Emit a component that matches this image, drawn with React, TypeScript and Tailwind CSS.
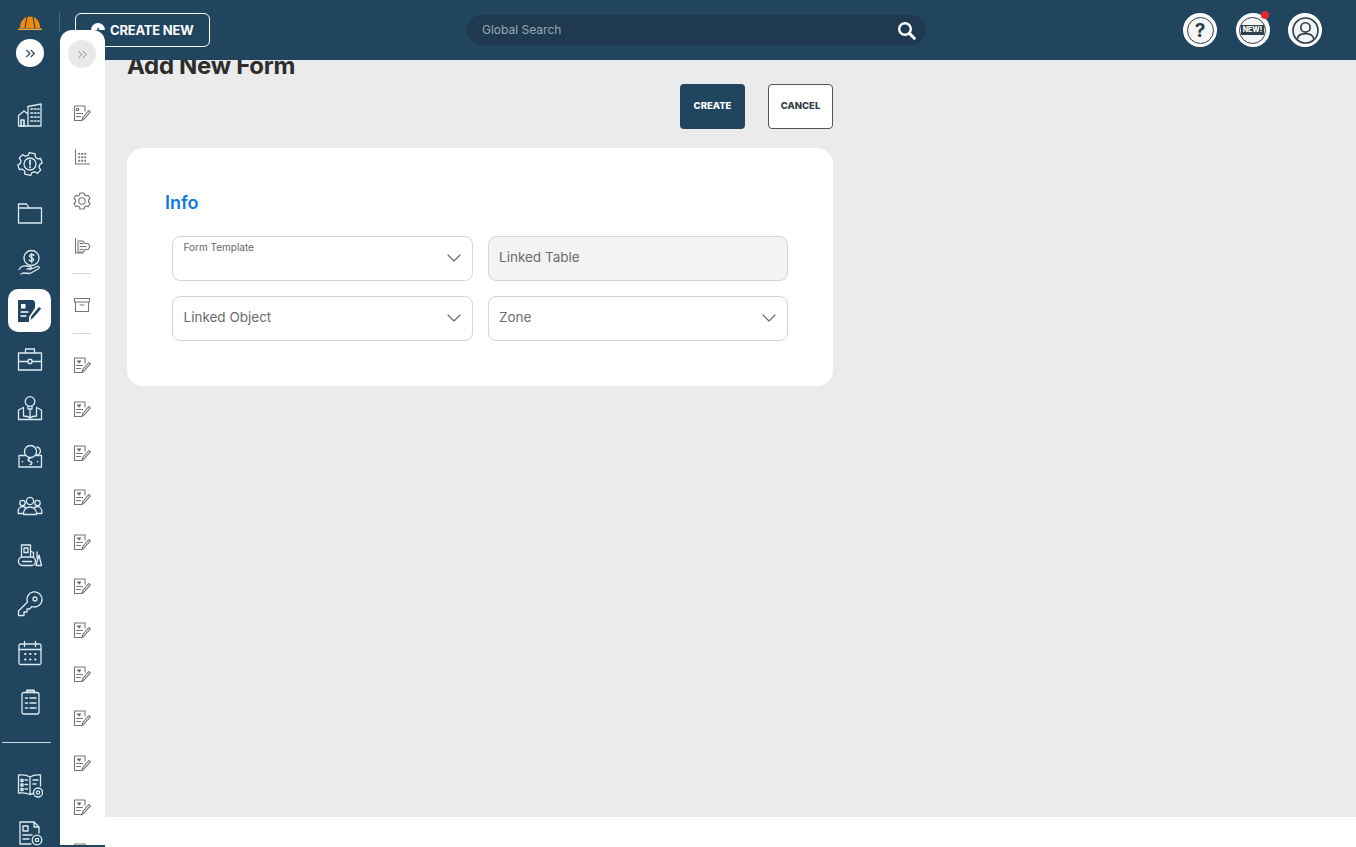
import type { ReactNode } from 'react';
import { ChevronDown, ChevronsRight } from 'lucide-react';

const font = { fontFamily: 'Inter, "Noto Sans", sans-serif' };

function RailSvg({ children }: { children: ReactNode }) {
  return (
    <svg
      width="26"
      height="26"
      viewBox="0 0 26 26"
      fill="none"
      stroke="currentColor"
      strokeWidth="1.3"
      strokeLinecap="round"
      strokeLinejoin="round"
    >
      {children}
    </svg>
  );
}

const railIcons: ReactNode[] = [
  // buildings
  <RailSvg key="building">
    <path d="M11 24V4.500L24 2v22zM1.500 24V13.500L7 9l4 3M1.500 24H24" />
    <path d="M14 7h1.500M17.500 7H19M21 7h1M14 11h1.500M17.500 11H19M21 11h1M14 15h1.500M17.500 15H19M21 15h1M14 19h1.500M17.500 19H19M21 19h1M4 18h3v6H4z" strokeWidth="1.700" />
  </RailSvg>,
  // gear with alert
  <RailSvg key="gear">
    <path d="M10 2h6l.7 3 2.600 1.400 3-1 2.400 4-2.200 2.200v2.800l2.200 2.200-2.400 4-3-1-2.600 1.400-.7 3h-6l-.7-3-2.600-1.400-3 1-2.400-4 2.200-2.200v-2.800L1.300 9.400l2.400-4 3 1L9.300 5z" transform="rotate(12 13 13)" />
    <circle cx="13" cy="13" r="6" />
    <path d="M13 9.500v4.200M13 16v.4" strokeWidth="1.800" />
  </RailSvg>,
  // folder
  <RailSvg key="folder">
    <path d="M1.500 23V4h8l2.500 4h12.500v15z" />
    <path d="M12 8H1.500" />
  </RailSvg>,
  // hand holding coin
  <RailSvg key="coin">
    <circle cx="14.500" cy="9" r="7.500" />
    <path d="M17 6.300c-.6-1-3.800-1.300-4.400.3-.7 2.200 4.600 1.800 4 4.200-.4 1.500-3.500 1.400-4.400.2M14.700 4.500v9" />
    <path d="M2 20.500c2-3.500 4.500-4 7.500-3.500l4 .8c1.500.5 1 2.300-.8 2.200l-2.700-.2M13 20.500l7-3c2-.7 3 1 1.500 2.200L13 24.500l-7-.5-2 1" />
  </RailSvg>,
  null,
  // briefcase
  <RailSvg key="case">
    <path d="M1.500 7h23v17h-23zM8.500 7V3h9v4M1.500 15.500h9.500M15 15.500h9.500" />
    <rect x="11" y="13.500" width="4" height="4" rx="1" />
  </RailSvg>,
  // person with book
  <RailSvg key="mentor">
    <circle cx="13" cy="6.500" r="4.800" />
    <path d="M11 11v3h4v-3M1.500 24.500V15l5-2.500M24.500 24.500V15l-5-2.500M1.500 24.500H24.500M6.500 12.500v8.500c3 0 5 .5 6.500 2 1.500-1.500 3.500-2 6.500-2v-8.500M13 14v9" />
  </RailSvg>,
  // cash and coins
  <RailSvg key="cash">
    <circle cx="13.500" cy="7.500" r="6" />
    <path d="M20 3c3 .5 4.500 4 2.500 6.500-.7 1-1.800 1.500-3 1.500" />
    <path d="M8 11.500H2v11.500h22.500V11.500H19" />
    <path d="M13 14.500c-2.500 0-2.500 2.500 0 3s2.500 3 0 3M5.500 17.500v.3M20.500 17.500v.3" strokeWidth="1.500" />
  </RailSvg>,
  // people group
  <RailSvg key="people">
    <circle cx="13" cy="8" r="3.600" />
    <circle cx="5.500" cy="10" r="2.700" />
    <circle cx="20.500" cy="10" r="2.700" />
    <path d="M6.500 21.500v-1.500c0-3.500 3-6 6.500-6s6.500 2.500 6.500 6v1.500zM6.500 20.500H1.200v-2c0-3 2-5 4.500-5 1 0 2 .3 2.600 1M19.500 20.500h5.300v-2c0-3-2-5-4.500-5-1 0-2 .3-2.600 1" />
  </RailSvg>,
  // bulldozer
  <RailSvg key="dozer">
    <path d="M4.500 14V3h9v11M7 6h4v4.500H7zM13.500 9l3 1.500v4.500" />
    <rect x="1.500" y="15" width="17" height="8.500" rx="4" />
    <path d="M20 10v6M22 13l2.500 10.500h-5.500z" />
    <path d="M5.500 19.500h9" strokeWidth="1.500" />
  </RailSvg>,
  // key
  <RailSvg key="key">
    <path d="M25 8.500a7.500 7.500 0 0 1-10 7l-2.500 2.500h-2.500v3H7v3.500H1.500v-4.500L10.500 11a7.500 7.500 0 1 1 14.500-2.500z" />
    <circle cx="18" cy="8" r="2" />
  </RailSvg>,
  // calendar
  <RailSvg key="calendar">
    <rect x="2" y="4" width="22" height="20.500" rx="1.500" />
    <path d="M2 9.500h22M7.500 1.500v5M18.500 1.500v5" />
    <path d="M8 14h.6M13 14h.6M18 14h.6M8 19.500h.6M13 19.500h.6M18 19.500h.6" strokeWidth="1.800" />
  </RailSvg>,
  // clipboard list
  <RailSvg key="clipboard">
    <rect x="5" y="3.500" width="17" height="21.500" rx="2" />
    <path d="M10 3.500V1.500h7v2" strokeWidth="1.800" />
    <path d="M8.500 9h2M8.500 14h2M8.500 19h2M13 9h6M13 14h6M13 19h6" strokeWidth="1.500" />
  </RailSvg>,
];

const bottomIcons: ReactNode[] = [
  // open book with gear
  <RailSvg key="manual">
    <path d="M13 5v17.500c-3-1.500-7-2-11.500-1.500V3c4.500-.5 8.500 0 11.500 2zM13 5c3-2 7-2.500 10.500-2v11M13 22.500c1-.5 2-.8 3-1" />
    <path d="M4 7.500h2v2H4zM4 12h2v2H4zM4 16.500h2v2H4zM16 8h5M16 12h3M8 8h2.500M8 12.500h2.500M8 17h2.500" strokeWidth="1.400" />
    <circle cx="21" cy="20.500" r="4.500" />
    <circle cx="21" cy="20.500" r="1.600" />
  </RailSvg>,
  // document with gear
  <RailSvg key="docgear">
    <path d="M17 2H3v22h11M17 2l5 5v6M17 2v5h5" />
    <path d="M6 6h5v5H6zM6 15h9M6 19h6" strokeWidth="1.400" />
    <circle cx="20" cy="20" r="4.800" />
    <circle cx="20" cy="20" r="1.700" />
  </RailSvg>,
];

function ActiveFormIcon() {
  return (
    <svg width="26" height="26" viewBox="0 0 26 26" fill="none" strokeLinecap="round" strokeLinejoin="round">
      <path d="M2 2h15l2 2v6l-6 9v5H2z" fill="#21445f" />
      <path d="M5 6h4.500v4.500H5z" fill="#ffffff" />
      <path d="M5 14h7M5 18h5" stroke="#ffffff" strokeWidth="1.400" />
      <path d="M14 22.500l1-4.500 8-9.500 2.500 2.200-8 9.300z" fill="#21445f" stroke="#ffffff" strokeWidth="0.800" />
    </svg>
  );
}

function SubSvg({ children }: { children: ReactNode }) {
  return (
    <svg
      width="18"
      height="18"
      viewBox="0 0 18 18"
      fill="none"
      stroke="#757575"
      strokeWidth="1.100"
      strokeLinecap="round"
      strokeLinejoin="round"
    >
      {children}
    </svg>
  );
}

function SubFormIcon({ heart = false }: { heart?: boolean }) {
  return (
    <SubSvg>
      <path d="M12 7V2H1.500v14.500H9" />
      {heart ? (
        <path d="M4.500 4.800h3.500L6.200 7.200z" fill="#555555" strokeWidth="0.600" />
      ) : (
        <path d="M3.500 4.500h2v2h-2z" />
      )}
      <path d="M3.500 9.500h6M3.500 12.500h4" />
      <path d="M9 16.500l.8-3.200 6-6.800 1.500 1.300-6 6.900z" />
    </SubSvg>
  );
}

const subTopIcons: ReactNode[] = [
  <SubFormIcon key="form" />,
  <SubSvg key="chart">
    <path d="M2.500 1.500v14.500H16.500" />
    <path d="M5.500 5h1.500v1.500H5.500zM8.500 5H10v1.500H8.500zM11.500 5h1.500v1.500h-1.500zM5.500 8.500h1.500V10H5.500zM8.500 8.500H10V10H8.500zM11.500 8.500h1.500V10h-1.500zM5.500 12h1.500v1.500H5.500zM8.500 12H10v1.500H8.500zM11.500 12h1.500v1.500h-1.500z" fill="#757575" strokeWidth="0.300" />
  </SubSvg>,
  <SubSvg key="gear">
    <path d="M7 1h4l.5 2 1.800 1 2-.6L17 6.500l-1.500 1.500v2l1.500 1.500-1.700 3.100-2-.6-1.800 1-.5 2H7l-.5-2-1.800-1-2 .6L1 11.500 2.500 10V8L1 6.500l1.700-3.100 2 .6 1.800-1z" />
    <circle cx="9" cy="9" r="3.200" />
  </SubSvg>,
  <SubSvg key="hex">
    <path d="M2.500 1.500v14.500H10" />
    <path d="M5 4h5l2 2.500h3l2 3-2 3h-3l-1.500 2.500H5z" />
    <path d="M7 6.500h3M7 9.500h6M7 12.500h3" />
  </SubSvg>,
];

function Field({ label, floating, disabled, chevron = true }: { label: string; floating?: boolean; disabled?: boolean; chevron?: boolean }) {
  return (
    <div
      className={`flex h-[45px] items-center justify-between rounded-lg border border-[#d6d6d6] pl-[10.500px] pr-[6px] ${
        disabled ? 'bg-[#f3f3f3]' : 'bg-white'
      }`}
    >
      {floating ? (
        <span className="-mt-[24px] text-[10px] leading-[14px] text-[#666666]">{label}</span>
      ) : (
        <span className="-mt-[2px] text-[13.500px] text-[#6b6b6b]">{label}</span>
      )}
      {chevron && <ChevronDown size={24} strokeWidth={1.1} className="-mt-px text-[#666666]" />}
    </div>
  );
}

export default function App() {
  return (
    <div className="relative flex h-screen w-full overflow-hidden bg-white" style={font}>
      {/* Rail izquierdo */}
      <aside className="flex h-full w-[60px] shrink-0 flex-col items-center overflow-hidden bg-[#21445f] text-[#dcebf2]">
        <div className="flex h-[39px] shrink-0 items-end justify-center pb-[7px]">
          <svg width="26" height="18" viewBox="0 0 26 18">
            <path d="M3 14C3 7 7 2.500 13 2.500S23 7 23 14z" fill="#f08a0c" />
            <path d="M10 3l-2 11M16 3l2 11" stroke="#21445f" strokeWidth="1.100" />
            <path d="M1 14.500h24v1.500H1z" fill="#f6a93a" />
          </svg>
        </div>
        <div className="flex h-7 w-7 shrink-0 items-center justify-center rounded-full bg-white text-[#21445f]">
          <ChevronsRight size={15} strokeWidth={2} />
        </div>
        <div className="mt-[23.500px] flex w-full shrink-0 flex-col items-center">
          {railIcons.map((icon, i) =>
            icon === null ? (
              <div key={i} className="flex h-[48.900px] items-center justify-center pr-[2px]">
                <div className="flex h-[43px] w-[43px] items-center justify-center rounded-[10px] bg-white">
                  <ActiveFormIcon />
                </div>
              </div>
            ) : (
              <div key={i} className="flex h-[48.900px] items-center justify-center">
                {icon}
              </div>
            ),
          )}
          <div className="mb-[17px] ml-[2px] mt-[16px] h-px w-[49px] shrink-0 self-start bg-[#c5d8e2]" />
          {bottomIcons.map((icon, i) => (
            <div key={i} className="flex h-[48.900px] items-center justify-center">
              {icon}
            </div>
          ))}
        </div>
      </aside>

      <div className="flex min-w-0 flex-1 flex-col">
        {/* Topo */}
        <header className="relative z-10 flex h-[60px] shrink-0 items-center bg-[#21445f]">
          <div className="ml-[15px] flex h-[34px] w-[135px] items-center rounded-md border border-white pl-[15px] text-white">
            <span className="flex h-[14px] w-[14px] items-center justify-center rounded-full bg-white text-[12px] font-bold leading-none text-[#21445f]">+</span>
            <span className="ml-[5px] text-[13px] font-bold leading-none tracking-[-0.2px]">CREATE NEW</span>
          </div>
          <div className="ml-[257px] flex h-[30px] w-[459px] items-center justify-between rounded-full bg-[#1f3a50] pl-[15px] pr-[10px]">
            <span className="text-[12px] text-[#98a8b4]">Global Search</span>
            <svg width="19" height="19" viewBox="0 0 19 19" fill="none" stroke="#ffffff" strokeLinecap="round">
              <circle cx="8" cy="8" r="5.800" strokeWidth="2.400" />
              <path d="M12.500 12.500l4.800 4.800" strokeWidth="3" />
            </svg>
          </div>
          <div className="ml-[257px] flex items-center gap-[18.500px]">
            <div className="flex h-[34px] w-[34px] items-center justify-center rounded-full border-[3px] border-white bg-[#f3f5f6]">
              <div className="flex h-[27px] w-[27px] items-center justify-center rounded-full border-[1.500px] border-[#2f3f4c] text-[19px] font-bold leading-none text-[#2f3f4c]">?</div>
            </div>
            <div className="relative flex h-[34px] w-[34px] items-center justify-center overflow-visible rounded-full border-[3px] border-white bg-[#f3f5f6]">
              <div className="flex h-[27px] w-[27px] items-center justify-center rounded-full border-[1.500px] border-[#2f3f4c]">
                <span className="-mx-1 bg-[#2f3f4c] px-[2px] text-[7px] font-extrabold leading-[10px] text-white">NEW!</span>
              </div>
              <span className="absolute -right-[2px] -top-[5px] h-2 w-2 rounded-full bg-[#e0282e]" />
            </div>
            <div className="flex h-[34px] w-[34px] items-center justify-center rounded-full border-[3px] border-white bg-[#f3f5f6]">
              <svg width="27" height="27" viewBox="0 0 26 26" fill="none" stroke="#2f3f4c" strokeWidth="1.600">
                <circle cx="13" cy="13" r="12" />
                <circle cx="13" cy="10" r="4.500" />
                <path d="M5 21.500c.5-4 4-5.500 8-5.500s7.500 1.500 8 5.500" />
              </svg>
            </div>
          </div>
        </header>

        {/* Conteudo */}
        <main className="h-[757px] shrink-0 bg-[#ebebeb] pl-[67px]">
          <div className="w-[706px]">
            <h1 className="-mt-[6px] text-[24px] font-bold leading-[24px] tracking-[-0.3px] text-[#2d2d2d]">Add New Form</h1>
            <div className="mt-[6px] flex justify-end gap-[23px]">
              <button className="h-[45px] w-[65px] rounded bg-[#21445f] text-[9.500px] font-extrabold text-white">CREATE</button>
              <button className="h-[45px] w-[65px] rounded border border-[#4a5560] bg-white text-[9.500px] font-extrabold text-[#333d47]">CANCEL</button>
            </div>
            <section className="mt-[19px] h-[238px] rounded-2xl bg-white pl-[38px] pr-[45px] pt-[42px]">
              <h2 className="text-[18px] font-semibold leading-[26px] text-[#0f7bd8]">Info</h2>
              <div className="ml-[7px] mt-[20px] grid grid-cols-2 gap-x-[15px] gap-y-[15px]">
                <Field label="Form Template" floating />
                <Field label="Linked Table" disabled chevron={false} />
                <Field label="Linked Object" />
                <Field label="Zone" />
              </div>
            </section>
          </div>
        </main>
      </div>

      {/* Menu secundario sobre o topo */}
      <div className="absolute bottom-0 left-[60px] z-20 h-[817px] w-[45px] bg-[#21445f]">
        <div className="flex h-[815px] flex-col items-center overflow-hidden rounded-t-xl bg-white pr-px pt-[10px]">
          <div className="flex h-7 w-7 shrink-0 items-center justify-center rounded-full bg-[#e9e9e9] text-[#8a8a8a]">
            <ChevronsRight size={15} strokeWidth={1.600} />
          </div>
          <div className="mt-[23px] flex shrink-0 flex-col items-center">
            {subTopIcons.map((icon, i) => (
              <div key={i} className="flex h-[44.200px] items-center justify-center">
                {icon}
              </div>
            ))}
          </div>
          <div className="mt-[5px] h-px w-[18px] shrink-0 bg-[#d5d5d5]" />
          <div className="flex h-[59px] shrink-0 items-center justify-center pt-[3px]">
            <SubSvg>
              <path d="M1.500 2.500h15v3.500h-15zM2.500 6v9.500h13V6M7 9h4" />
            </SubSvg>
          </div>
          <div className="h-px w-[18px] shrink-0 bg-[#d5d5d5]" />
          <div className="mt-[9px] flex shrink-0 flex-col items-center">
            {Array.from({ length: 12 }).map((_, i) => (
              <div key={i} className="flex h-[44.200px] shrink-0 items-center justify-center">
                <SubFormIcon heart />
              </div>
            ))}
          </div>
        </div>
      </div>
      <div className="absolute left-[59px] top-3 z-0 h-5 w-px bg-[#4d6a80]" />
    </div>
  );
}
